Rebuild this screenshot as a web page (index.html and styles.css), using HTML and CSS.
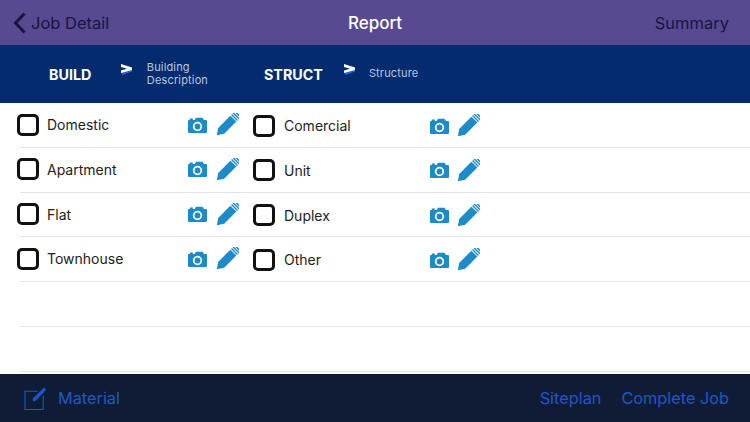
FILE: index.html
```html
<!DOCTYPE html>
<html lang="en">
<head>
<meta charset="utf-8">
<title>Report</title>
<link rel="stylesheet" href="styles.css">
</head>
<body>
<svg class="defs" width="0" height="0" aria-hidden="true">
  <symbol id="cam" viewBox="0 0 19 16">
    <path fill-rule="evenodd" d="M1 3h.8V1.500h3V3h1.800L8 .8h6.500L16 3h2a1 1 0 0 1 1 1v11a1 1 0 0 1-1 1H1a1 1 0 0 1-1-1V4a1 1 0 0 1 1-1zm8.500 1.800a4.700 4.700 0 1 0 0 9.400 4.700 4.700 0 0 0 0-9.400zm0 1.800a2.900 2.900 0 1 1 0 5.800 2.900 2.900 0 0 1 0-5.800z"/>
  </symbol>
  <symbol id="pen" viewBox="0 0 23 23">
    <g transform="rotate(45 11.500 11.500)">
      <path d="M7.300 3.200h8.400V20.500l-4.200 6.100-4.200-6.100z"/>
      <path d="M7.300.9h8.400v1.400H7.300zM7.300-1.400h8.400V0H7.300z"/>
      <path d="M7.300-2.200v-.5a1 1 0 0 1 1-1h6.400a1 1 0 0 1 1 1v.5z"/>
    </g>
  </symbol>
</svg>
<header class="nav">
  <div class="back">
    <svg class="chev" viewBox="0 0 13 22"><path d="M11.500 1.500L2.500 11l9 9.500" fill="none" stroke="currentColor" stroke-width="3"/></svg>
    <span>Job Detail</span>
  </div>
  <div class="title">Report</div>
  <div class="summary">Summary</div>
</header>
<section class="sub">
  <div class="step step-build">
    <b class="code">BUILD</b>
    <svg class="arrow" viewBox="0 0 11 11"><path class="a2" d="M0 8l11-3v2.500L1.500 11z"/><path class="a1" d="M0 0l11 3.500v2.500L0 9V6.500L6 4.800 0 3z"/></svg>
    <span class="desc">Building<br>Description</span>
  </div>
  <div class="step step-struct">
    <b class="code">STRUCT</b>
    <svg class="arrow" viewBox="0 0 11 11"><path class="a2" d="M0 8l11-3v2.500L1.500 11z"/><path class="a1" d="M0 0l11 3.500v2.500L0 9V6.500L6 4.800 0 3z"/></svg>
    <span class="desc">Structure</span>
  </div>
</section>
<main class="list">
  <div class="row">
    <div class="cell"><i class="check"></i><span class="label">Domestic</span><span class="tools"><svg class="cam"><use href="#cam"/></svg><svg class="pen"><use href="#pen"/></svg></span></div>
    <div class="cell cell-right"><i class="check"></i><span class="label">Comercial</span><span class="tools"><svg class="cam"><use href="#cam"/></svg><svg class="pen"><use href="#pen"/></svg></span></div>
  </div>
  <div class="row">
    <div class="cell"><i class="check"></i><span class="label">Apartment</span><span class="tools"><svg class="cam"><use href="#cam"/></svg><svg class="pen"><use href="#pen"/></svg></span></div>
    <div class="cell cell-right"><i class="check"></i><span class="label">Unit</span><span class="tools"><svg class="cam"><use href="#cam"/></svg><svg class="pen"><use href="#pen"/></svg></span></div>
  </div>
  <div class="row">
    <div class="cell"><i class="check"></i><span class="label">Flat</span><span class="tools"><svg class="cam"><use href="#cam"/></svg><svg class="pen"><use href="#pen"/></svg></span></div>
    <div class="cell cell-right"><i class="check"></i><span class="label">Duplex</span><span class="tools"><svg class="cam"><use href="#cam"/></svg><svg class="pen"><use href="#pen"/></svg></span></div>
  </div>
  <div class="row">
    <div class="cell"><i class="check"></i><span class="label">Townhouse</span><span class="tools"><svg class="cam"><use href="#cam"/></svg><svg class="pen"><use href="#pen"/></svg></span></div>
    <div class="cell cell-right"><i class="check"></i><span class="label">Other</span><span class="tools"><svg class="cam"><use href="#cam"/></svg><svg class="pen"><use href="#pen"/></svg></span></div>
  </div>
  <div class="row"></div>
  <div class="row"></div>
</main>
<footer class="foot">
  <div class="material">
    <svg class="edit" viewBox="0 0 25 25" fill="none" stroke="currentColor"><path d="M14 5.500H1v19h19V10" stroke-width="1.100"/><path d="M9.500 15.800l-.4-2.600L20.800 1.700l2.200 2.200L12 15.300z" fill="currentColor" stroke-width=".3"/></svg>
    <span>Material</span>
  </div>
  <div class="links"><span>Siteplan</span><span>Complete Job</span></div>
</footer>
</body>
</html>
```
FILE: styles.css
```css
* { box-sizing: border-box; }
html, body { margin: 0; height: 422px; overflow: hidden; }
body {
  width: 750px;
  display: flex;
  flex-direction: column;
  background: #fff;
  font-family: Inter, "Liberation Sans", sans-serif;
}
.defs { position: absolute; }

.nav {
  height: 45px;
  flex: none;
  display: grid;
  grid-template-columns: 1fr auto 1fr;
  align-items: center;
  padding: 0 21px;
  background: #574a90;
  color: #1c1342;
  font-size: 16.500px;
}
.back { display: flex; align-items: center; gap: 5px; margin-left: -8px; }
.chev { width: 13px; height: 22px; color: #1c1342; }
.title { color: #fff; font-weight: 500; font-size: 17px; }
.summary { text-align: right; }

.sub {
  height: 58px;
  flex: none;
  display: flex;
  background: #032b6d;
  color: #fff;
}
.step { display: flex; position: relative; align-items: center; }
.step-build { width: 264px; padding-left: 49px; }
.step-struct { flex: 1; }
.code { font-size: 14.300px; font-weight: 700; }
.arrow { width: 11px; height: 11px; margin-bottom: 9px; }
.a1 { fill: #fff; }
.a2 { fill: #2a62d6; }
.step-build .arrow { margin-left: 29.500px; }
.step-struct .arrow { margin-left: 21px; }
.desc { font-size: 11px; line-height: 13.500px; color: #b9c6e2; letter-spacing: .15px; }
.step-build .desc { margin-left: 15px; }
.step-struct .desc { margin-left: 14px; }

.list { flex: 1; }
.row {
  height: 44.800px;
  display: flex;
  position: relative;
  border-bottom: 1px solid #e4e4e6;
  margin-left: 20px;
}
.cell {
  width: 236px;
  margin-left: -3px;
  margin-right: 3px;
  display: flex;
  align-items: center;
  height: 44px;
  padding-bottom: 1px;
}
.cell-right { padding-bottom: 0; padding-top: 1px; }
.check {
  width: 22px;
  height: 22px;
  flex: none;
  border: 3px solid #111;
  border-radius: 5px;
}
.label { margin-left: 8px; font-size: 14px; color: #222; flex: 1; }
.cell-right .label { margin-left: 9px; }
.tools { display: flex; align-items: center; gap: 9px; margin-right: 14px; color: #1b8bc9; }
.cell-right .tools { margin-right: 9px; gap: 8.500px; }
.cam { width: 19px; height: 16px; fill: #1b8bc9; }
.pen { width: 23px; height: 23px; fill: #1b8bc9; }

.foot {
  height: 48px;
  flex: none;
  display: flex;
  justify-content: space-between;
  align-items: center;
  padding: 0 21px 0 24px;
  background: #101c36;
  color: #1d58c8;
  font-size: 16.300px;
}
.material { display: flex; align-items: center; gap: 10px; }
.edit { width: 24px; height: 24px; }
.links { display: flex; gap: 20px; }
```
